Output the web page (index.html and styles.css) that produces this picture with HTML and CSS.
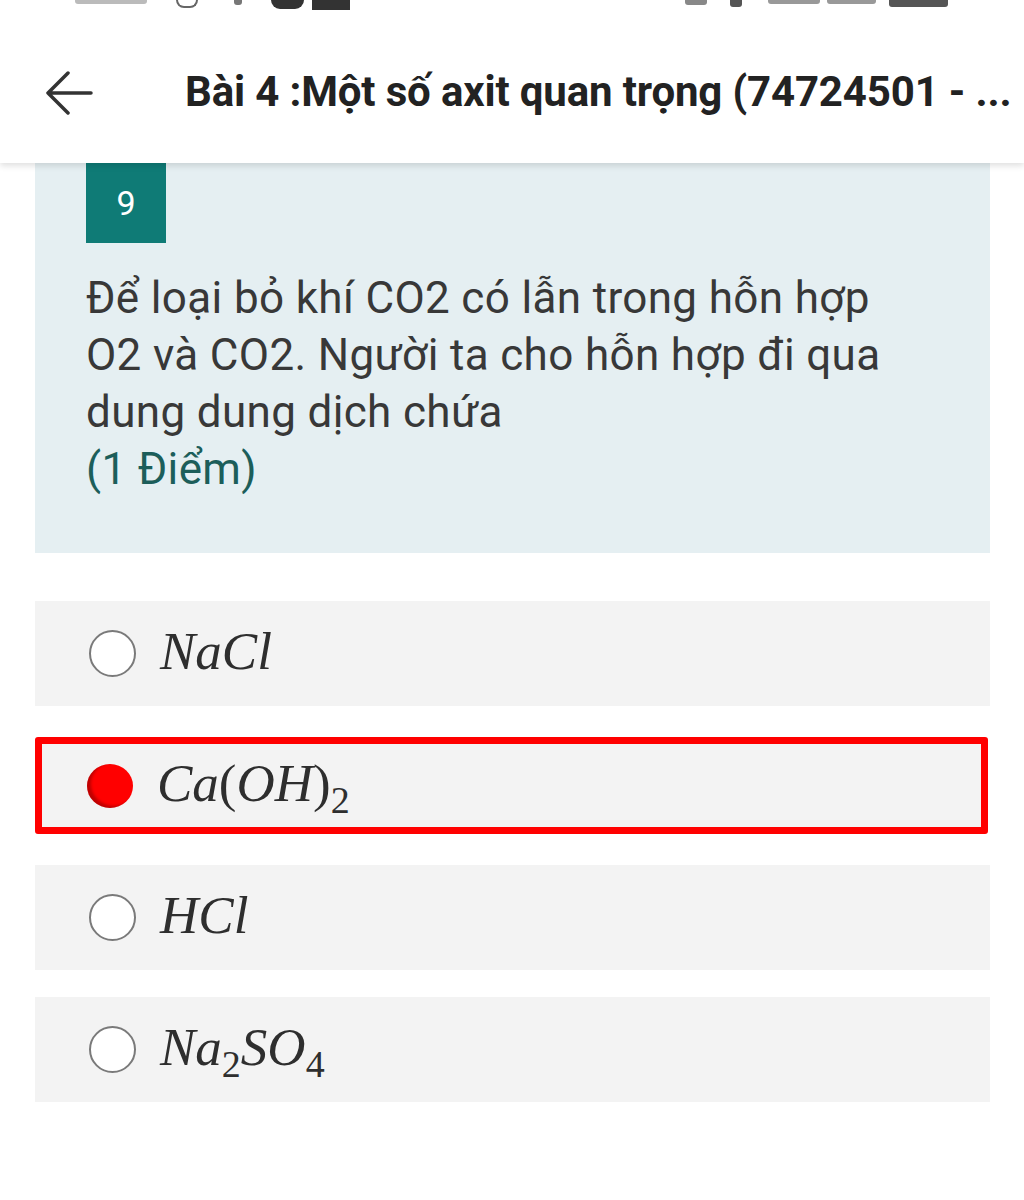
FILE: index.html
```html
<!DOCTYPE html>
<html lang="vi">
<head>
  <meta charset="UTF-8">
  <title>Bài 4 :Một số axit quan trọng</title>
  <link rel="stylesheet" href="styles.css">
</head>
<body>
<div class="header">
  <div class="statusbar">
    <span class="sb sb-time"></span>
    <span class="sb sb-ring"></span>
    <span class="sb sb-hash"></span>
    <span class="sb sb-blob"></span>
    <span class="sb sb-box"></span>
    <span class="sb-spacer"></span>
    <span class="sb sb-vo"></span>
    <span class="sb sb-wifi"></span>
    <span class="sb sb-sig1"></span>
    <span class="sb sb-sig2"></span>
    <span class="sb sb-batt"></span>
  </div>
  <div class="titlebar">
    <svg class="back" width="50" height="44" viewBox="0 0 50 44">
      <path d="M47 22H4M24 2L4 22l20 20" fill="none" stroke="#333" stroke-width="3.5" stroke-linecap="round" stroke-linejoin="round"/>
    </svg>
    <div class="title">Bài 4 :Một số axit quan trọng (74724501 - ...</div>
  </div>
</div>

<div class="page">
  <div class="question">
    <div class="qnum">9</div>
    <div class="qtext">Để loại bỏ khí CO2 có lẫn trong hỗn hợp O2 và CO2. Người ta cho hỗn hợp đi qua dung dung dịch chứa</div>
    <div class="qpoint">(1 Điểm)</div>
  </div>

  <div class="options">
    <div class="option">
      <span class="radio"></span>
      <span class="formula">NaCl</span>
    </div>
    <div class="option selected">
      <span class="radio checked"></span>
      <span class="formula">Ca<span class="up">(</span>OH<span class="up">)</span><sub>2</sub></span>
    </div>
    <div class="option">
      <span class="radio"></span>
      <span class="formula">HCl</span>
    </div>
    <div class="option">
      <span class="radio"></span>
      <span class="formula">Na<sub>2</sub>SO<sub>4</sub></span>
    </div>
  </div>
</div>
</body>
</html>
```

FILE: styles.css
```css
body {
  margin: 0;
  background: #fff;
  font-family: Roboto, "Noto Sans", sans-serif;
  color: #333;
}

/* top bar */
.header {
  height: 163px;
  background: #fff;
  box-shadow: 0 3px 6px rgba(0, 0, 0, 0.12);
  position: relative;
  z-index: 2;
}
.statusbar {
  display: flex;
  align-items: flex-start;
  height: 10px;
  padding: 0 76px 0 75px;
}
.sb {
  display: block;
  height: 8px;
  background: #444;
  border-radius: 0 0 3px 3px;
}
.sb-spacer { flex: 1; }
.sb-time { width: 72px; height: 4px; background: #bbb; }
.sb-ring { width: 18px; margin-left: 29px; background: none; border: 2px solid #666; border-top: 0; border-radius: 0 0 10px 10px; height: 6px; }
.sb-hash { width: 8px; margin-left: 36px; height: 5px; background: #777; }
.sb-blob { width: 33px; margin-left: 29px; height: 9px; border-radius: 0 0 16px 16px; background: #333; }
.sb-box { width: 38px; margin-left: 8px; height: 10px; background: #333; border-radius: 0; }
.sb-vo { width: 22px; height: 5px; background: #888; }
.sb-wifi { width: 12px; margin-left: 23px; height: 7px; background: #555; }
.sb-sig1 { width: 52px; margin-left: 26px; height: 4px; background: #999; }
.sb-sig2 { width: 49px; margin-left: 7px; height: 4px; background: #999; }
.sb-batt { width: 59px; margin-left: 13px; height: 7px; background: #555; }

.titlebar {
  display: flex;
  align-items: center;
  height: 153px;
  padding-left: 44px;
}
.back {
  flex: none;
  margin-top: 12px;
}
.title {
  margin-left: 91px;
  font-size: 42px;
  font-weight: 700;
  color: #222;
  white-space: nowrap;
  letter-spacing: -0.15px;
  margin-top: 10px;
}

/* content */
.page {
  width: 955px;
  margin-left: 35px;
}
.question {
  background: #e5eff2;
  padding: 0 0 55px 51px;
}
.qnum {
  width: 80px;
  height: 80px;
  background: #0f7b76;
  color: #fff;
  font-size: 34px;
  display: flex;
  align-items: center;
  justify-content: center;
}
.qtext {
  margin-top: 27px;
  width: 830px;
  font-size: 44px;
  letter-spacing: 0.35px;
  line-height: 57px;
  color: #383838;
}
.qpoint {
  font-size: 44px;
  letter-spacing: 0.35px;
  line-height: 57px;
  color: #1c5e5a;
}

.options {
  display: flex;
  flex-direction: column;
  margin-top: 48px;
}
.option {
  display: flex;
  align-items: center;
  height: 105px;
  background: #f3f3f3;
  padding-left: 54px;
  box-sizing: border-box;
  margin-bottom: 31px;
}
.option:nth-child(3) {
  margin-bottom: 27px;
}
.option.selected {
  height: 97px;
  width: 953px;
  border: 7px solid #f00;
  border-radius: 3px;
  padding-left: 47px;
}
.radio {
  flex: none;
  width: 43px;
  height: 43px;
  border: 2.5px solid #7a7a7a;
  border-radius: 50%;
  background: #fff;
}
.radio.checked {
  background: #f00;
  width: 46px;
  height: 44px;
  border: 0;
  margin-left: -2px;
  box-shadow: inset 4px -2px 3px rgba(0, 0, 0, 0.25);
}
.formula {
  margin-left: 24px;
  margin-top: -6px;
  font-family: "Liberation Serif", "Times New Roman", serif;
  font-style: italic;
  font-size: 53px;
  color: #2e2e2e;
}
.formula .up {
  font-style: normal;
}
.formula sub {
  font-style: normal;
  font-size: 38px;
  vertical-align: -12px;
  line-height: 0;
}
```
